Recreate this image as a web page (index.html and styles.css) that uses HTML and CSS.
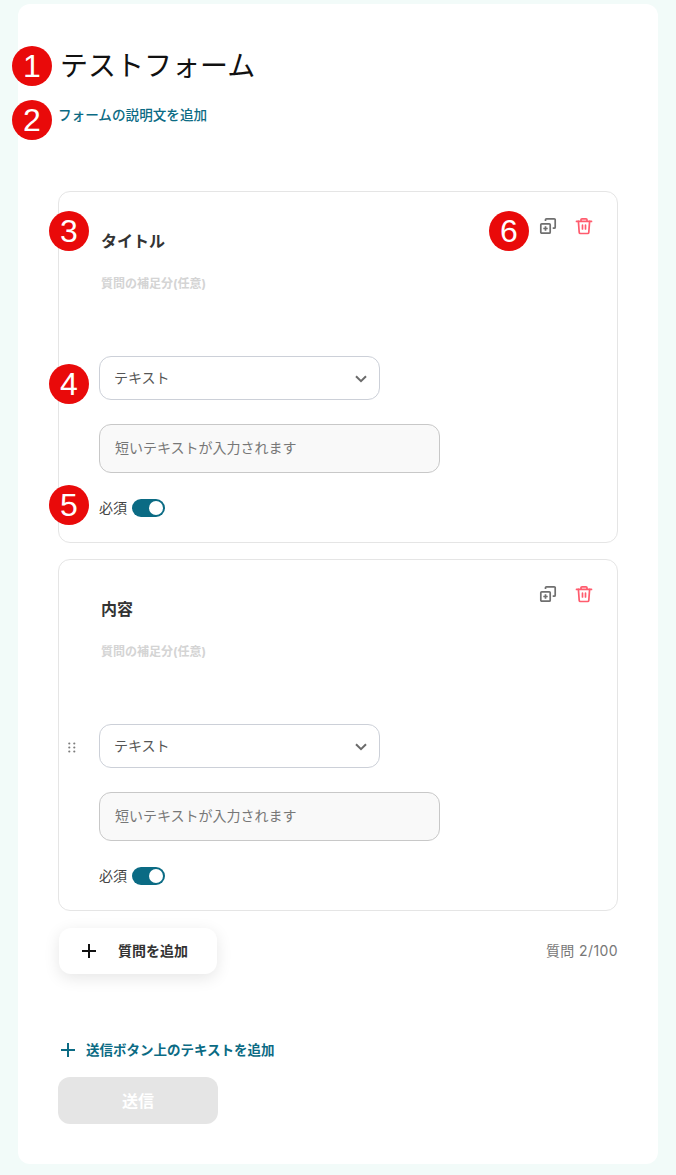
FILE: index.html
```html
<!DOCTYPE html>
<html lang="ja">
<head>
    <meta charset="UTF-8">
    <meta name="viewport" content="width=device-width, initial-scale=1.0">
    <title>テストフォーム</title>
    <link rel="stylesheet" href="styles.css">
</head>
<body>
    <div class="panel">
        <h1 class="form-title">テストフォーム</h1>
        <a class="form-desc">フォームの説明文を追加</a>

        <div class="card card-first">
            <div class="card-tools">
                <svg class="icon" viewBox="0 0 18 18" fill="none" stroke="#6f6f6f" stroke-width="1.7">
                    <path d="M6.5 4V2.8a1 1 0 0 1 1-1h7.7a1 1 0 0 1 1 1v7.4a1 1 0 0 1-1 1h-1.5"/>
                    <rect x="1.8" y="6.8" width="9.4" height="9.4" rx="1"/>
                    <path d="M6.5 9.3v4.4M4.3 11.5h4.4"/>
                </svg>
                <svg class="icon" viewBox="0 0 18 18" fill="none" stroke="#ff5c6e" stroke-width="1.7" stroke-linecap="round" stroke-linejoin="round">
                    <path d="M1.5 4.4h15"/>
                    <path d="M6 4.2V2.8a1 1 0 0 1 1-1h4a1 1 0 0 1 1 1v1.4"/>
                    <path d="M3.4 4.4l.8 11a1.2 1.2 0 0 0 1.2 1.1h7.2a1.2 1.2 0 0 0 1.2-1.1l.8-11"/>
                    <path d="M7.5 8.2v3.8M10.5 8.2v3.8"/>
                </svg>
            </div>
            <div class="q-title">タイトル</div>
            <div class="q-note">質問の補足分(任意)</div>
            <div class="q-select">
                <span>テキスト</span>
                <svg class="chevron" viewBox="0 0 12 8" fill="none" stroke="#6b6b6b" stroke-width="2"><path d="M1 1.2l5 5 5-5"/></svg>
            </div>
            <div class="q-input">短いテキストが入力されます</div>
            <div class="q-required">
                <span>必須</span>
                <span class="toggle"><span class="knob"></span></span>
            </div>
        </div>

        <div class="card">
            <svg class="handle" viewBox="0 0 8 14" fill="#7d7d7d">
                <circle cx="1.3" cy="1.5" r="1.1"/><circle cx="6.3" cy="1.5" r="1.1"/>
                <circle cx="1.3" cy="5.5" r="1.1"/><circle cx="6.3" cy="5.5" r="1.1"/>
                <circle cx="1.3" cy="9.5" r="1.1"/><circle cx="6.3" cy="9.5" r="1.1"/>
            </svg>
            <div class="card-tools">
                <svg class="icon" viewBox="0 0 18 18" fill="none" stroke="#6f6f6f" stroke-width="1.7">
                    <path d="M6.5 4V2.8a1 1 0 0 1 1-1h7.7a1 1 0 0 1 1 1v7.4a1 1 0 0 1-1 1h-1.5"/>
                    <rect x="1.8" y="6.8" width="9.4" height="9.4" rx="1"/>
                    <path d="M6.5 9.3v4.4M4.3 11.5h4.4"/>
                </svg>
                <svg class="icon" viewBox="0 0 18 18" fill="none" stroke="#ff5c6e" stroke-width="1.7" stroke-linecap="round" stroke-linejoin="round">
                    <path d="M1.5 4.4h15"/>
                    <path d="M6 4.2V2.8a1 1 0 0 1 1-1h4a1 1 0 0 1 1 1v1.4"/>
                    <path d="M3.4 4.4l.8 11a1.2 1.2 0 0 0 1.2 1.1h7.2a1.2 1.2 0 0 0 1.2-1.1l.8-11"/>
                    <path d="M7.5 8.2v3.8M10.5 8.2v3.8"/>
                </svg>
            </div>
            <div class="q-title">内容</div>
            <div class="q-note">質問の補足分(任意)</div>
            <div class="q-select">
                <span>テキスト</span>
                <svg class="chevron" viewBox="0 0 12 8" fill="none" stroke="#6b6b6b" stroke-width="2"><path d="M1 1.2l5 5 5-5"/></svg>
            </div>
            <div class="q-input">短いテキストが入力されます</div>
            <div class="q-required">
                <span>必須</span>
                <span class="toggle"><span class="knob"></span></span>
            </div>
        </div>

        <div class="add-row">
            <div class="add-btn">
                <svg class="plus" viewBox="0 0 14 14" stroke="#111" stroke-width="2"><path d="M7 0v14M0 7h14"/></svg>
                <span class="add-label">質問を追加</span>
            </div>
            <span class="q-count">質問 2/100</span>
        </div>

        <a class="add-text">
            <svg class="plus" viewBox="0 0 14 14" stroke="#0b6b84" stroke-width="2"><path d="M7 0v14M0 7h14"/></svg>
            <span>送信ボタン上のテキストを追加</span>
        </a>
        <div class="submit">送信</div>

        <span class="badge badge-1">1</span>
        <span class="badge badge-2">2</span>
        <span class="badge badge-3">3</span>
        <span class="badge badge-4">4</span>
        <span class="badge badge-5">5</span>
        <span class="badge badge-6">6</span>
    </div>
</body>
</html>
```

FILE: styles.css
```css
* {
    box-sizing: border-box;
}
body {
    margin: 0;
    height: 1175px;
    overflow: hidden;
    background-color: #f2fbf9;
    font-family: Inter, "Noto Sans CJK JP", sans-serif;
    color: #333;
}
.panel {
    position: relative;
    width: 640px;
    height: 1160px;
    margin: 4px 0 0 18px;
    padding: 41px 40px 0;
    background-color: #fff;
    border-radius: 12px;
}
.form-title {
    margin: 0 0 0 2px;
    font-size: 28px;
    font-weight: 400;
    line-height: 42px;
    color: #111;
}
.form-desc {
    display: block;
    margin-top: 18px;
    font-size: 13.6px;
    font-weight: 500;
    line-height: 20px;
    color: #0b6b84;
}
.card {
    position: relative;
    height: 352px;
    padding: 36px 40px 0;
    margin-top: 16px;
    border: 1px solid #e5e5e5;
    border-radius: 12px;
}
.card-first {
    margin-top: 66px;
}
.card-tools {
    position: absolute;
    top: 25px;
    right: 24px;
    display: flex;
    gap: 18px;
}
.icon {
    width: 18px;
    height: 18px;
}
.handle {
    position: absolute;
    left: 9px;
    top: 182px;
    width: 8px;
    height: 14px;
}
.q-title {
    margin-left: 2px;
    font-size: 16px;
    font-weight: 700;
    line-height: 26px;
    color: #333;
}
.q-note {
    margin: 21px 0 0 2px;
    font-size: 12px;
    font-weight: 700;
    line-height: 18px;
    color: #d4d4d4;
}
.q-select {
    display: flex;
    align-items: center;
    justify-content: space-between;
    width: 281px;
    height: 44px;
    margin-top: 63px;
    padding: 0 12px 0 14px;
    border: 1px solid #ccd0d8;
    border-radius: 12px;
    font-size: 14px;
    line-height: 40px;
    color: #555;
}
.chevron {
    width: 12px;
    height: 8px;
    margin-top: 2px;
}
.q-input {
    width: 341px;
    height: 49px;
    margin-top: 24px;
    padding: 0 15px;
    border: 1px solid #c8c8c8;
    border-radius: 12px;
    background-color: #f9f9f9;
    font-size: 14px;
    line-height: 45px;
    color: #777;
}
.q-required {
    display: flex;
    align-items: center;
    gap: 5px;
    margin-top: 25px;
    font-size: 14px;
    line-height: 20px;
    color: #444;
}
.toggle {
    display: flex;
    justify-content: flex-end;
    align-items: center;
    width: 33px;
    height: 18px;
    padding: 0 2px;
    border-radius: 9px;
    background-color: #0b6b84;
}
.knob {
    width: 14px;
    height: 14px;
    border-radius: 50%;
    background-color: #fff;
}
.add-row {
    display: flex;
    align-items: center;
    justify-content: space-between;
    margin-top: 17px;
}
.add-btn {
    display: flex;
    align-items: center;
    gap: 22px;
    width: 158px;
    height: 46px;
    margin-left: 1px;
    padding-left: 23px;
    border-radius: 12px;
    background-color: #fff;
    box-shadow: 0 4px 16px rgba(0, 0, 0, 0.1);
    font-size: 14px;
    font-weight: 700;
    color: #333;
}
.add-label {
    margin-bottom: 2px;
}
.plus {
    width: 14px;
    height: 14px;
    flex: none;
}
.q-count {
    margin-bottom: 2px;
    font-size: 14px;
    letter-spacing: 0.4px;
    color: #777;
}
.add-text {
    display: flex;
    align-items: center;
    gap: 11px;
    margin: 56px 0 0 3px;
    font-size: 13.5px;
    font-weight: 700;
    line-height: 40px;
    height: 40px;
    color: #0b6b84;
}
.submit {
    width: 160px;
    height: 47px;
    margin-top: 7px;
    border-radius: 12px;
    background-color: #e5e5e5;
    font-size: 16px;
    font-weight: 700;
    line-height: 49px;
    text-align: center;
    color: #fff;
}
.badge {
    position: absolute;
    width: 40px;
    height: 40px;
    border-radius: 50%;
    background-color: #e90a0a;
    font-family: "Liberation Sans", sans-serif;
    font-size: 32px;
    line-height: 40px;
    text-align: center;
    color: #fff;
}
.badge-1 { left: -6px; top: 42px; }
.badge-2 { left: -6px; top: 96px; }
.badge-3 { left: 31px; top: 207px; }
.badge-4 { left: 31px; top: 360px; }
.badge-5 { left: 31px; top: 481px; }
.badge-6 { left: 471px; top: 207px; }
```
